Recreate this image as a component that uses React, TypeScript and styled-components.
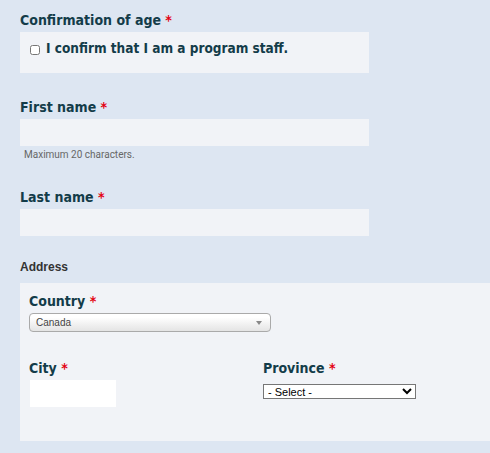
import React from 'react'
import styled, { createGlobalStyle } from 'styled-components'

const GlobalStyle = createGlobalStyle`
  html, body {
    margin: 0;
    padding: 0;
    background: #dde6f2;
  }
  body {
    font-family: 'DejaVu Sans Condensed', 'DejaVu Sans', sans-serif;
  }
`

const colors = {
  page: '#dde6f2',
  well: '#f1f3f7',
  ink: '#133c49',
  required: '#e3000f',
  hint: '#666666'
}

const Form = styled.form`
  padding: 10px 0 12px 20px;
  width: 470px;
`

const Field = styled.div<{ $gap?: number }>`
  margin-bottom: ${({ $gap }) => $gap ?? 0}px;
`

const Label = styled.label`
  display: block;
  font-weight: bold;
  font-size: 14px;
  line-height: 20px;
  color: ${colors.ink};
  margin-bottom: 2px;
`

const Star = styled.span`
  color: ${colors.required};
`

const Well = styled.div`
  width: 349px;
  height: 41px;
  box-sizing: border-box;
  background: ${colors.well};
  padding: 7px 0 0 10px;
`

const CheckLabel = styled.label`
  display: flex;
  align-items: center;
  gap: 6px;
  height: 18px;
  font-weight: bold;
  font-size: 13.5px;
  color: ${colors.ink};
`

const Check = styled.input`
  margin: 3px 0 0;
  width: 10px;
  height: 10px;
`

const TextInput = styled.input<{ $width?: number; $light?: boolean }>`
  display: block;
  box-sizing: border-box;
  width: ${({ $width }) => $width ?? 349}px;
  height: 27px;
  margin: ${({ $light }) => ($light ? '2px 0 0 1px' : '0')};
  border: none;
  outline: none;
  background: ${({ $light }) => ($light ? '#ffffff' : colors.well)};
`

const Hint = styled.div`
  font-family: Roboto, 'Liberation Sans', sans-serif;
  font-size: 10px;
  color: ${colors.hint};
  margin: 3px 0 0 4px;
`

const Legend = styled.div`
  font-family: 'Liberation Sans', Arial, sans-serif;
  font-weight: bold;
  font-size: 12px;
  color: #333333;
  margin-bottom: 9px;
`

const Panel = styled.div`
  background: ${colors.well};
  height: 158px;
  box-sizing: border-box;
  padding: 8px 0 0 9px;
`

const FancySelect = styled.div`
  position: relative;
  width: 242px;
  height: 19px;
  margin-top: 2px;
  box-sizing: border-box;
  border: 1px solid #aaaaaa;
  border-radius: 4px;
  background: linear-gradient(#ffffff 20%, #f1f1f1 60%, #e4e4e4);
  font-family: 'Liberation Sans', Arial, sans-serif;
  font-size: 10px;
  color: #444444;
  line-height: 17px;
  padding-left: 6px;

  &::after {
    content: '';
    position: absolute;
    right: 8px;
    top: 7px;
    border-left: 3px solid transparent;
    border-right: 3px solid transparent;
    border-top: 4px solid #888888;
  }
`

const Columns = styled.div`
  display: grid;
  grid-template-columns: 234px 1fr;
  margin-top: 26px;
`

const NativeSelect = styled.select`
  width: 153px;
  height: 15px;
  margin: 4px 0 0;
  padding: 0;
  font-family: 'Liberation Sans', Arial, sans-serif;
  font-size: 11px;
  border: 1px solid #767676;
  border-radius: 0;
  background: #ffffff;
  color: #000;
`

const Required: React.FC = () => <Star>*</Star>

export default function App() {
  return (
    <>
      <GlobalStyle />
      <Form onSubmit={(e) => e.preventDefault()}>
        <Field $gap={24}>
          <Label>
            Confirmation of age <Required />
          </Label>
          <Well>
            <CheckLabel>
              <Check type="checkbox" />I confirm that I am a program staff.
            </CheckLabel>
          </Well>
        </Field>

        <Field $gap={27}>
          <Label>
            First name <Required />
          </Label>
          <TextInput type="text" />
          <Hint>Maximum 20 characters.</Hint>
        </Field>

        <Field $gap={24}>
          <Label>
            Last name <Required />
          </Label>
          <TextInput type="text" />
        </Field>

        <Legend>Address</Legend>
        <Panel>
          <Label>
            Country <Required />
          </Label>
          <FancySelect>Canada</FancySelect>
          <Columns>
            <div>
              <Label>
                City <Required />
              </Label>
              <TextInput type="text" $width={86} $light />
            </div>
            <div>
              <Label>
                Province <Required />
              </Label>
              <NativeSelect defaultValue="">
                <option value="">- Select -</option>
              </NativeSelect>
            </div>
          </Columns>
        </Panel>
      </Form>
    </>
  )
}
